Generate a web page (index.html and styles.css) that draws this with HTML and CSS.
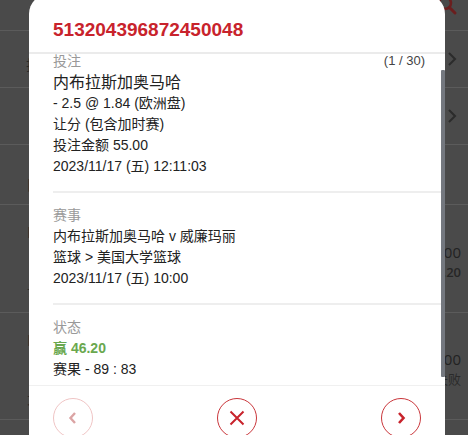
FILE: index.html
```html
<!DOCTYPE html>
<html lang="zh">
<head>
<meta charset="utf-8">
<title>注单详情</title>
<link rel="stylesheet" href="styles.css">
</head>
<body>
<div class="page">
  <div class="bg-row bg-top">
    <svg class="search" width="22" height="22" viewBox="0 0 22 22"><circle cx="9" cy="9" r="6" fill="none" stroke="#6b1e1e" stroke-width="2.5"/><path d="M13.5 13.5 L19 19" stroke="#6b1e1e" stroke-width="3" stroke-linecap="round"/></svg>
  </div>
  <div class="bg-row bg-item bg-inset">
    <span class="bg-left">投</span>
    <svg class="chev" width="10" height="14" viewBox="0 0 10 14"><path d="M2 1 L8 7 L2 13" fill="none" stroke="#2b2b2b" stroke-width="2"/></svg>
  </div>
  <div class="bg-row bg-item">
    <span class="bg-left"></span>
    <svg class="chev" width="10" height="14" viewBox="0 0 10 14"><path d="M2 1 L8 7 L2 13" fill="none" stroke="#2b2b2b" stroke-width="2"/></svg>
  </div>
  <div class="bg-row bg-sub">
    <span class="bg-left">日</span>
  </div>
  <div class="bg-row bg-bet">
    <div class="bg-left-col"><span>内</span><span>让</span></div>
    <div class="bg-amounts"><span class="amt">55.00</span><span class="amt2">46.20</span></div>
  </div>
  <div class="bg-row bg-bet bg-bet2">
    <div class="bg-left-col"><span>内</span><span>大</span></div>
    <div class="bg-amounts"><span class="amt">50.00</span><span class="amt3">失败</span></div>
  </div>
  <div class="bg-row bg-last"></div>

  <div class="modal">
    <div class="modal-head">
      <h1 class="ticket-id">513204396872450048</h1>
    </div>
    <div class="modal-body">
      <div class="scroll-content">
        <section class="sec sec-first">
          <div class="sec-top">
            <span class="label">投注</span>
            <span class="count">(1 / 30)</span>
          </div>
          <div class="pick">内布拉斯加奥马哈</div>
          <div class="line">- 2.5 @ 1.84 (欧洲盘)</div>
          <div class="line">让分 (包含加时赛)</div>
          <div class="line">投注金额 55.00</div>
          <div class="line">2023/11/17 (五) 12:11:03</div>
        </section>
        <section class="sec">
          <div class="label">赛事</div>
          <div class="line">内布拉斯加奥马哈 v 威廉玛丽</div>
          <div class="line">篮球 &gt; 美国大学篮球</div>
          <div class="line">2023/11/17 (五) 10:00</div>
        </section>
        <section class="sec sec-last">
          <div class="label">状态</div>
          <div class="line win">赢 46.20</div>
          <div class="line">赛果 - 89 : 83</div>
        </section>
      </div>
      <div class="scroll-track"><div class="scroll-thumb"></div></div>
    </div>
    <div class="modal-foot">
      <button class="circle-btn disabled" aria-label="上一个">
        <svg width="12" height="14" viewBox="0 0 12 14"><path d="M8 2 L3.5 7 L8 12" fill="none" stroke="currentColor" stroke-width="2.4"/></svg>
      </button>
      <button class="circle-btn" aria-label="关闭">
        <svg width="18" height="18" viewBox="0 0 18 18"><path d="M2.5 2.5 L15.5 15.5 M15.5 2.5 L2.5 15.5" fill="none" stroke="currentColor" stroke-width="2"/></svg>
      </button>
      <button class="circle-btn" aria-label="下一个">
        <svg width="12" height="14" viewBox="0 0 12 14"><path d="M4 2 L8.5 7 L4 12" fill="none" stroke="currentColor" stroke-width="2.6"/></svg>
      </button>
    </div>
  </div>
</div>
</body>
</html>
```

FILE: styles.css
```css
* { box-sizing: border-box; }

html, body {
  margin: 0;
  padding: 0;
  height: 435px;
  overflow: hidden;
}

body {
  background: #4a4a4a;
  font-family: "Liberation Sans", "Noto Sans CJK SC", sans-serif;
}

.page {
  position: relative;
  width: 468px;
  height: 435px;
  overflow: hidden;
  background: #4a4a4a;
}

/* ---------- dimmed page behind ---------- */
.bg-row {
  display: flex;
  justify-content: space-between;
  border-bottom: 1px solid #5b5b5b;
  color: #272727;
  font-family: "Open Sans", "Noto Sans CJK SC", sans-serif;
}

.bg-top {
  height: 31px;
  justify-content: flex-end;
  padding-right: 10px;
}
.bg-top .search { margin-top: -6px; }

.bg-item {
  height: 57px;
  align-items: center;
  padding-right: 11px;
}

.bg-left {
  padding-left: 26px;
  font-size: 14px;
  line-height: 20px;
  color: #2a2a2a;
  align-self: flex-start;
  margin-top: 24px;
}

.bg-sub { height: 60px; }
.bg-sub .bg-left { margin-top: 30px; }

.bg-bet {
  height: 108px;
  padding-right: 7px;
}
.bg-bet2 { height: 107px; }

.bg-left-col {
  display: flex;
  flex-direction: column;
  gap: 40px;
  padding: 16px 0 0 27px;
  font-size: 14px;
  line-height: 20px;
  color: #2a2a2a;
}

.bg-amounts {
  display: flex;
  flex-direction: column;
  align-items: flex-end;
  padding-top: 37px;
}
.bg-bet2 .bg-amounts { padding-top: 36px; }

.amt { font-size: 15px; line-height: 20px; color: #222; }
.amt2 { font-size: 13px; line-height: 20px; font-weight: 600; color: #262626; }
.amt3 { font-size: 13px; line-height: 20px; color: #2a2a2a; }

.bg-last { height: 30px; border-bottom: 0; }

/* ---------- modal ---------- */
.modal {
  position: absolute;
  left: 29px;
  top: -6px;
  width: 416px;
  background: #fff;
  border-radius: 20px 20px 0 0;
  overflow: hidden;
  color: #222;
}

.modal-head {
  padding: 25px 24px 11px;
  border-bottom: 2px solid #ebebeb;
}

.ticket-id {
  margin: 0;
  font-size: 19px;
  line-height: 22px;
  font-weight: bold;
  color: #c8232c;
}

.modal-body {
  height: 331px;
  overflow: hidden;
  display: grid;
  grid-template-columns: 1fr 4px;
}

.scroll-content {
  margin-top: -4px;
}

.scroll-track { background: #fff; }
.scroll-thumb {
  margin-top: 16px;
  height: 307px;
  background: #74787f;
  border-radius: 1px;
}

.sec {
  margin-left: 24px;
  padding: 11px 0 14px;
  border-bottom: 2px solid #eeeeee;
}
.sec-first { padding-top: 0; }
.sec-last { border-bottom: 0; }

.sec-top {
  display: flex;
  justify-content: space-between;
  align-items: center;
  padding-right: 16px;
}

.label {
  font-size: 14px;
  line-height: 22px;
  color: #999;
}

.count {
  font-size: 13px;
  line-height: 22px;
  color: #444;
}

.pick {
  font-size: 16px;
  line-height: 21px;
  color: #222;
}

.line {
  font-size: 14px;
  line-height: 21px;
  color: #222;
}

.win {
  color: #6aa84f;
  font-weight: bold;
}

.modal-foot {
  border-top: 1px solid #f0f0f0;
  padding: 12px 24px 20px;
  display: flex;
  justify-content: space-between;
}

.circle-btn {
  width: 40px;
  height: 40px;
  border-radius: 50%;
  border: 1px solid #c9363b;
  background: #fff;
  color: #c8232c;
  padding: 0;
  display: flex;
  align-items: center;
  justify-content: center;
}

.circle-btn.disabled {
  border-color: #efc4c4;
  color: #dba4a4;
}
```
